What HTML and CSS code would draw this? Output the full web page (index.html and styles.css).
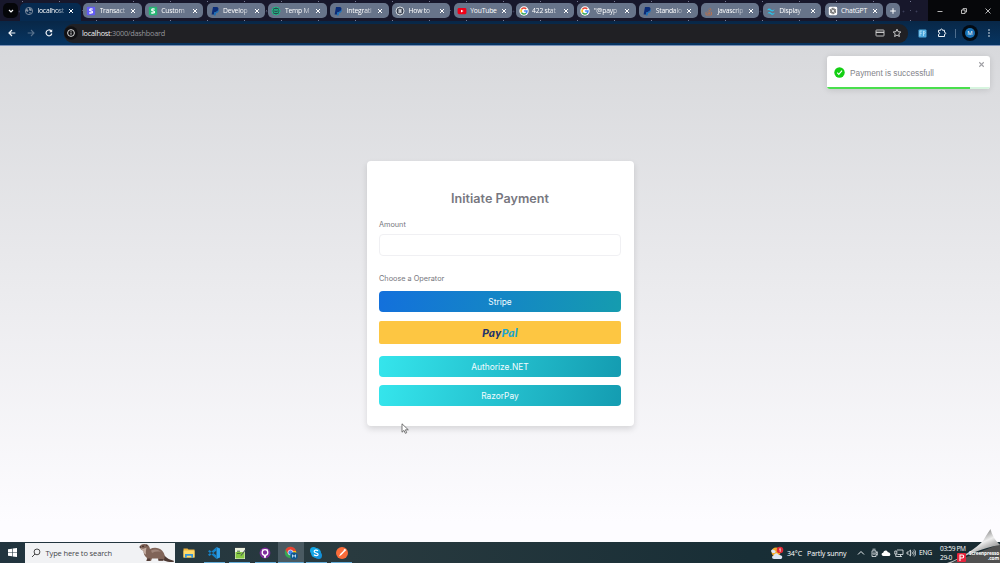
FILE: index.html
```html
<!DOCTYPE html>
<html lang="en">
<head>
    <meta charset="UTF-8">
    <meta name="viewport" content="width=device-width, initial-scale=1.0">
    <title>localhost:3000/dashboard</title>
    <link rel="stylesheet" href="styles.css">
</head>
<body>
    <svg class="defs" width="0" height="0">
        <symbol id="close" viewBox="0 0 8 8"><path d="M2 2l4 4M6 2l-4 4" stroke="currentColor" stroke-width="1" fill="none"/></symbol>
        <symbol id="stripe" viewBox="0 0 10 10"><rect x=".8" y=".8" width="8.4" height="8.4" rx="1" fill="currentColor"/><path d="M6.7 3.3C5.7 2.7 3.7 2.7 3.7 3.9s2.8.8 2.8 2-2 1.4-3.2.7" fill="none" stroke="#fff" stroke-width="1.3"/></symbol>
        <symbol id="paypal" viewBox="0 0 10 10"><path d="M3 1h3.5c2 0 2.4 1.5 1.7 3S6 6 4.5 6L4 8.5H1.6z" fill="#0a2c78"/><path d="M4.5 6.2C7 6.2 8 5 8.3 3.3c1 .8.5 3.5-2.3 3.8L5.5 9.4H3.8z" fill="#1670bd"/></symbol>
        <symbol id="google" viewBox="0 0 10 10"><circle cx="5" cy="5" r="4.7" fill="#fff"/><g fill="none" stroke-width="1.5"><path d="M7.2 3A3 3 0 0 0 2.5 3.4" stroke="#ea4335"/><path d="M2.5 3.4a3 3 0 0 0 0 3.2" stroke="#fbbc05"/><path d="M2.5 6.6A3 3 0 0 0 7 7.2" stroke="#34a853"/><path d="M7 7.2A3 3 0 0 0 8 5H5.1" stroke="#4285f4"/></g></symbol>
    </svg>

    <header class="browser">
        <div class="tab-strip">
            <div class="tab-search"><svg width="8" height="8" viewBox="0 0 8 8"><path d="M2 3l2 2 2-2" fill="none" stroke="#fff" stroke-width="1.2"/></svg></div>
            <div class="tab active">
                <svg class="fav" viewBox="0 0 10 10"><circle cx="5" cy="5" r="3.6" fill="none" stroke="#8493a5" stroke-width=".9"/><path d="M2 3l2 .5.5 1.5-1 1-1.5-1zM5 2l2 .5 1 2-2 .5L5 4zM5 6l2 .5-1 1.5z" fill="#8493a5"/></svg>
                <span>localhost</span><svg class="x"><use href="#close"/></svg>
            </div>
            <div class="tab"><svg class="fav violet"><use href="#stripe"/></svg><span>Transact</span><svg class="x"><use href="#close"/></svg></div>
            <div class="tab"><svg class="fav green"><use href="#stripe"/></svg><span>Custom</span><svg class="x"><use href="#close"/></svg></div>
            <div class="tab"><svg class="fav"><use href="#paypal"/></svg><span>Develop</span><svg class="x"><use href="#close"/></svg></div>
            <div class="tab">
                <svg class="fav" viewBox="0 0 10 10"><circle cx="5" cy="5" r="4" fill="#2b4a50" stroke="#21bd87"/><path d="M3 3.5h4v3H3zl2 1.5 2-1.5" fill="none" stroke="#21bd87" stroke-width=".8"/></svg>
                <span>Temp M</span><svg class="x"><use href="#close"/></svg>
            </div>
            <div class="tab"><svg class="fav"><use href="#paypal"/></svg><span>Integrati</span><svg class="x"><use href="#close"/></svg></div>
            <div class="tab">
                <svg class="fav" viewBox="0 0 10 10"><circle cx="5" cy="5" r="4" fill="#333b4b" stroke="#e8edf2" stroke-width=".9"/><path d="M3.2 3.2h1.6v3.6H3.2M6.8 3.2H5.6v3.6h1.2M3 5h4" fill="none" stroke="#e8edf2" stroke-width=".8"/></svg>
                <span>How to</span><svg class="x"><use href="#close"/></svg>
            </div>
            <div class="tab">
                <svg class="fav" viewBox="0 0 10 10"><rect x=".6" y="2" width="8.8" height="6.2" rx="1.4" fill="#f00018"/><path d="M4 3.7v2.8l2.5-1.4z" fill="#fff"/></svg>
                <span class="whole">YouTube</span><svg class="x"><use href="#close"/></svg>
            </div>
            <div class="tab"><svg class="fav"><use href="#google"/></svg><span>422 stat</span><svg class="x"><use href="#close"/></svg></div>
            <div class="tab"><svg class="fav"><use href="#google"/></svg><span>"@payp</span><svg class="x"><use href="#close"/></svg></div>
            <div class="tab"><svg class="fav"><use href="#paypal"/></svg><span>Standalo</span><svg class="x"><use href="#close"/></svg></div>
            <div class="tab">
                <svg class="fav" viewBox="0 0 10 10"><path d="M2 6v3h5.500V6M3.400 7.600h2.800M3.500 5.800l2.700.6M4.300 3.800l2.300 1.500M5.800 2l1.500 2.300" fill="none" stroke="#b5714f" stroke-width=".9"/></svg>
                <span>javascrip</span><svg class="x"><use href="#close"/></svg>
            </div>
            <div class="tab">
                <svg class="fav" viewBox="0 0 10 10"><path d="M1 4.500c1.500-3 3-2 4-1s2 1 3.500-.5C7.500 6 6 5.700 5 5S2.500 3.500 1 4.500zM1.500 7.500C3 5 4.500 6 5.500 7s2 .5 3.500-.5C7.500 9.500 6 9 5 8.200s-2-1.500-3.500-.7z" fill="#28c4ec"/></svg>
                <span>Display</span><svg class="x"><use href="#close"/></svg>
            </div>
            <div class="tab">
                <svg class="fav" viewBox="0 0 10 10"><rect x=".8" y=".8" width="8.400" height="8.400" rx="1.400" fill="#fff"/><path d="M5 2l2.500 1.500v3L5 8 2.500 6.500v-3zM5 3.400l1.400.8v1.600L5 6.600l-1.400-.8V4.200zM5 2L3.600 4.200M7.500 3.500L5 3.400M7.500 6.500L6.400 4.200M5 8l1.400-2.200M2.500 6.500L5 6.600M2.500 3.500l1.100 2.300" fill="none" stroke="#444" stroke-width=".55"/></svg>
                <span class="whole">ChatGPT</span><svg class="x"><use href="#close"/></svg>
            </div>
            <div class="new-tab"><svg width="8" height="8" viewBox="0 0 8 8"><path d="M4 1.200v5.600M1.200 4h5.600" stroke="#fff"/></svg></div>
            <div class="window-controls">
                <svg viewBox="0 0 8 8"><path d="M1.500 4.500h5" stroke="#ccc" stroke-width=".9"/></svg>
                <svg viewBox="0 0 8 8"><path d="M1.500 3h3.500v3.500H1.500zM3 3V1.600h3.500V5H5" fill="none" stroke="#ccc" stroke-width=".9"/></svg>
                <svg viewBox="0 0 8 8"><path d="M1.500 1.500l5 5M6.500 1.500l-5 5" stroke="#ccc" stroke-width=".9"/></svg>
            </div>
        </div>

        <div class="toolbar">
            <nav class="nav">
                <svg viewBox="0 0 10 10"><path d="M8.300 5H2M5 2L2 5l3 3" fill="none" stroke="#f2f6fa" stroke-width="1.200"/></svg>
                <svg viewBox="0 0 10 10"><path d="M1.700 5H8M5 2l3 3-3 3" fill="none" stroke="#57718c" stroke-width="1.100"/></svg>
                <svg viewBox="0 0 10 10"><path d="M7.800 5.500A2.900 2.900 0 1 1 7 2.800" fill="none" stroke="#f2f6fa" stroke-width="1.200"/><path d="M8.200 1.200v3H5.200z" fill="#f2f6fa"/></svg>
            </nav>
            <div class="address">
                <svg class="info" viewBox="0 0 14 14"><circle cx="7" cy="7" r="6.800" fill="#101013"/><circle cx="7" cy="7" r="3.400" fill="none" stroke="#eee" stroke-width=".9"/><path d="M7 6.500v2.200M7 4.900v.9" stroke="#eee" stroke-width=".9"/></svg>
                <span class="url"><b>localhost</b>:3000/dashboard</span>
                <svg class="card-icon" viewBox="0 0 10 10"><rect x="1" y="2" width="8" height="6" rx=".6" fill="none" stroke="#d0d0d0" stroke-width=".9"/><path d="M1 4.300h8" stroke="#d0d0d0" stroke-width="1.300"/></svg>
                <svg class="star" viewBox="0 0 10 10"><path d="M5 1.200l1.100 2.500 2.700.3-2 1.800.6 2.700L5 7.100 2.600 8.500l.6-2.700-2-1.800 2.700-.3z" fill="none" stroke="#ddd" stroke-width=".9"/></svg>
            </div>
            <div class="extensions">
                <svg width="9" height="9" viewBox="0 0 9 9"><rect x=".5" y=".5" width="8" height="8" rx="1" fill="#4ea9dd"/><path d="M2 7V2h2.200M2 4.300h1.800M5.500 2v5M5.500 2.300c2.200 0 2.200 2.400 0 2.400" fill="none" stroke="#b9e5fb" stroke-width=".8"/></svg>
                <svg width="10" height="10" viewBox="0 0 10 10"><path d="M1.500 2.300h2c-.3-1.700 2.300-1.700 2 0h2v2c1.700-.3 1.700 2.300 0 2v2.200h-6V6.300c1.500.3 1.500-2.300 0-2z" fill="none" stroke="#edf3f8"/></svg>
                <i class="divider"></i>
                <span class="avatar"><em>M</em></span>
                <svg class="dots" width="4" height="10" viewBox="0 0 4 10"><g fill="#edf3f8"><circle cx="2" cy="2" r=".8"/><circle cx="2" cy="5" r=".8"/><circle cx="2" cy="8" r=".8"/></g></svg>
            </div>
        </div>
    </header>

    <main class="page">
        <form class="card">
            <h1>Initiate Payment</h1>
            <label for="amount">Amount</label>
            <input id="amount" type="text">
            <label class="operator">Choose a Operator</label>
            <button type="button" class="btn stripe">Stripe</button>
            <button type="button" class="btn paypal"><span>Pay</span><span class="pal">Pal</span></button>
            <button type="button" class="btn cyan">Authorize.NET</button>
            <button type="button" class="btn cyan">RazorPay</button>
        </form>

        <div class="toast">
            <svg class="check" viewBox="0 0 11 11"><circle cx="5.500" cy="5.500" r="5.200" fill="#13cf13"/><path d="M3.200 5.700l1.600 1.700 3.200-3.700" fill="none" stroke="#fff" stroke-width="1.100"/></svg>
            <span>Payment is successfull</span>
            <svg class="dismiss"><use href="#close"/></svg>
            <div class="progress"><i></i></div>
        </div>
        <svg class="cursor" viewBox="0 0 8 11"><path d="M1 .8v8.400l2-1.800 1.300 2.900 1.400-.6-1.300-2.900h2.900z" fill="#fff" stroke="#555" stroke-width=".8"/></svg>
    </main>

    <footer class="taskbar">
        <div class="start"><svg width="9" height="9" viewBox="0 0 9 9"><path d="M0 1.300l4-.6v3.500H0zM4.600.6L9 0v4.200H4.600zM0 4.800h4v3.500l-4-.6zM4.600 4.800H9V9l-4.400-.6z" fill="#fff"/></svg></div>
        <div class="search">
            <svg class="lens" viewBox="0 0 10 10"><circle cx="6" cy="3.900" r="2.900" fill="none" stroke="#333" stroke-width=".9"/><path d="M4 6L1 9" stroke="#333" stroke-width=".9"/></svg>
            <span>Type here to search</span>
            <svg class="otter" viewBox="0 0 36 20">
                <path d="M23 11c3 1 4 5 11 6.500 2 .5 1 1.500-1 1.500-6 0-10-2-12-5z" fill="#4d3933"/>
                <path d="M1 4C1 1.500 3.500.8 6 1c3 .2 4.500 2 5 5 4-2 9-1.500 12 1.500s3.500 7 1.500 10h-5l-.5-2h-6l-1 2.500H7.500l.5-3C5 13 4.500 10 4.500 7.500 2.500 7.300 1 6 1 4z" fill="#806458"/>
                <path d="M12 7.500c4-2 8-1 10 1.500-3-.8-6-.5-9 1z" fill="#a0867b"/>
                <path d="M1.500 5c2 1 4 .8 6-.5-.3 2-1 4-.5 7C5 11 4.500 9 4.500 7.500 3 7.300 2 6.500 1.500 5z" fill="#c4ada1"/>
                <path d="M7.500 18l1-2.500h3l-.8 2.500zM19.500 17.700V16h5l-.5 1.700z" fill="#503c36"/>
                <circle cx="4" cy="3.300" r=".7" fill="#211"/><circle cx="1.200" cy="4" r=".8" fill="#322"/><circle cx="7.700" cy="2.300" r=".9" fill="#5a443c"/>
            </svg>
        </div>
        <div class="apps">
            <div class="app no-line"><svg viewBox="0 0 14 14"><path d="M1.500 2.500h4l1 1h6v8h-11z" fill="#eeb43e"/><path d="M1.500 4.500h11v7h-11z" fill="#ffda6b"/><path d="M3 11.800V8h8v3.800H9.300V9.700H4.700v2.100z" fill="#3595dc"/></svg></div>
            <div class="app"><svg viewBox="0 0 14 14"><path d="M9.500 1l3.500 1.500v9L9.500 13z" fill="#2a9ee8"/><path d="M9.500 1v3.500L2.500 10 1 8.800zM9.500 13V9.500L2.500 4 1 5.200z" fill="#1683c8"/></svg></div>
            <div class="app"><svg viewBox="0 0 14 14"><path d="M2 2h10v11H2z" fill="#eaf0dd"/><path d="M3 2V1M5 2V1M7 2V1M9 2V1M11 2V1" stroke="#555"/><path d="M2.500 6h9v6.500h-9z" fill="#85c842"/><path d="M4 5.200h3M4 7.500h3.500" stroke="#456c38"/><path d="M7.500 9.500l4.500-6 .8.700-4.500 5.500z" fill="#49545b"/></svg></div>
            <div class="app"><svg viewBox="0 0 14 14"><circle cx="7" cy="7" r="5.400" fill="#802b9d"/><circle cx="7" cy="6.500" r="2.800" fill="none" stroke="#fff" stroke-width="1.300"/><path d="M4.300 5V3.200l1.700.7M9.700 5V3.200L8 3.900" fill="#fff"/><path d="M6 9.200v2.500h2V9.200z" fill="#fff"/></svg></div>
            <div class="app current"><svg viewBox="0 0 14 14"><circle cx="6.500" cy="6.500" r="5.700" fill="#35a853"/><path d="M1.500 3.800A5.700 5.700 0 0 1 12 5H6.500l-2.700 3z" fill="#e94335"/><path d="M12 5c.8 3-1 6.500-4.500 7.200L9 5z" fill="#fbbf12"/><circle cx="6.500" cy="6.500" r="2.500" fill="#3e82ec" stroke="#fff" stroke-width=".7"/><circle cx="10" cy="10" r="3.700" fill="#0e578f"/><path d="M8.500 11.500V8.700L10 10.500l1.500-1.800v2.800" fill="none" stroke="#d9efff" stroke-width=".8"/></svg></div>
            <div class="app"><svg viewBox="0 0 14 14"><circle cx="7" cy="7" r="5" fill="#12a5e4"/><circle cx="4.500" cy="4.500" r="3.500" fill="#12a5e4"/><circle cx="9.500" cy="9.500" r="3.500" fill="#1390d9"/><path d="M9 4.900C7.800 3.700 5 4 5.200 5.700c.2 1.500 3.900 1.100 3.900 2.700 0 1.500-3 1.600-4.200.2" fill="none" stroke="#fff" stroke-width="1.200"/></svg></div>
            <div class="app"><svg viewBox="0 0 14 14"><circle cx="7" cy="7" r="6" fill="#fa6c3a"/><path d="M4 10.500L5.200 8 9 4.200l1 1L6.300 9z" fill="#fff"/><circle cx="9.800" cy="4.200" r="1.100" fill="#fff"/></svg></div>
        </div>
        <div class="weather">
            <svg viewBox="0 0 14 14"><circle cx="6" cy="6" r="4.500" fill="#f3a92b"/><path d="M4 13c-2.500 0-2.500-3.500 0-3.500 0-3 4-3 4.700-.5 2-.3 4 1 3.500 2.500-.3 1-1 1.500-2 1.500z" fill="#dbe6f5"/><path d="M1.500 6c-1.500-2 1.500-3.700 2.500-1.700 2 0 2 2.700.5 2.700H2.500z" fill="#dbe6f5"/><circle cx="10" cy="4" r="3.300" fill="#dc2834"/><path d="M9.300 3.300l.9-.8v3.300" stroke="#fff" stroke-width=".8" fill="none"/></svg>
            <span>34°C</span><span>Partly sunny</span>
        </div>
        <div class="tray">
            <svg viewBox="0 0 10 10"><path d="M2 6.500l3-3 3 3" fill="none" stroke="#e8edf0"/></svg>
            <svg viewBox="0 0 10 10"><path d="M3 2.800h4v5.700H3zM3.500 1.200h3M7 4.500l1.300-.7v3.400L7 6.500" fill="none" stroke="#e8edf0" stroke-width=".8"/><circle cx="5" cy="5.600" r=".9" fill="none" stroke="#e8edf0" stroke-width=".7"/></svg>
            <svg viewBox="0 0 10 10"><path d="M2.500 8C.2 8-.1 5 2.200 4.700 3 2 6 2 6.900 4.200 9.700 4 10.300 8 7.700 8z" fill="#fff"/></svg>
            <svg viewBox="0 0 10 10"><path d="M3 2h6v4.500H3.500M5 8.500h3M6.500 6.500v2M.8 3h2v3h-2zM1.800 6v2.500H5" fill="none" stroke="#e8edf0" stroke-width=".8"/></svg>
            <svg viewBox="0 0 10 10"><path d="M1 4h1.300L4.500 2v6L2.300 6H1zM5.800 3.700c.8.800.8 1.800 0 2.600M7 2.500c1.500 1.500 1.500 3.500 0 5M8.200 1.500c2 2 2 5 0 7" fill="none" stroke="#e8edf0" stroke-width=".8"/></svg>
            <span>ENG</span>
        </div>
        <div class="clock"><span>03:59 PM</span><span>29-0</span></div>
    </footer>

    <div class="page-curl">
        <svg viewBox="0 0 54 36">
            <defs><linearGradient id="fold" x1=".38" y1=".38" x2=".68" y2=".8"><stop offset="0" stop-color="#a5a5a5"/><stop offset=".35" stop-color="#eee"/><stop offset=".6" stop-color="#c0c0c0"/><stop offset="1" stop-color="#888"/></linearGradient></defs>
            <path d="M54 17L5 36h49z" fill="#505050"/>
            <path d="M1 36C16 31 30 21 37 14q4-7 7.500-12 2 9 9.500 16C36 21 20 28 5 36z" fill="url(#fold)"/>
            <rect x="11" y="26" width="9" height="9" rx="1" fill="#e5243c"/><path d="M14 34v-6h2.200c2 0 2 3 0 3H14" fill="none" stroke="#fff" stroke-width="1.100"/>
        </svg>
        <span>Screenpresso<br>.com</span>
    </div>
</body>
</html>
```
FILE: styles.css
```css
* {
    box-sizing: border-box;
}
body {
    margin: 0;
    width: 1000px;
    height: 563px;
    display: flex;
    flex-direction: column;
    overflow: hidden;
    font-family: "Open Sans", "Noto Sans", sans-serif;
}
svg {
    display: block;
    flex: none;
}
.defs {
    position: absolute;
}

/* browser */
.browser {
    height: 46px;
    flex: none;
    background: #07305a;
    border-bottom: 1px solid #7990b5;
}
.tab-strip {
    height: 21px;
    display: flex;
    align-items: center;
    padding-left: 3px;
    background-color: #17172b;
    background-image:
        radial-gradient(circle, #777b96 0.5px, transparent 1px),
        radial-gradient(circle, #53566f 0.5px, transparent 1px),
        radial-gradient(circle, #3c3e58 0.6px, transparent 1.2px);
    background-size: 37px 19px, 23px 11px, 13px 17px;
    background-position: 4px -8px, 2px 5px, 0 3px;
}
.tab-search {
    width: 15px;
    height: 15px;
    border-radius: 5px;
    background: #050609;
    display: grid;
    place-items: center;
}
.tab {
    width: 58.5px;
    height: 15px;
    margin-right: 3.3px;
    padding: 0 4.5px 0 3px;
    border-radius: 5px;
    background: #67748a;
    display: flex;
    align-items: center;
    color: #fff;
    font-size: 6.8px;
    letter-spacing: -0.22px;
    flex: none;
}
.tab.active {
    width: 61px;
    height: 18px;
    align-self: flex-end;
    margin: 0 2px 0 2px;
    padding: 0 6px 3px 4px;
    background: #062a50;
    border-radius: 5px 5px 0 0;
}
.tab span {
    width: 29px;
    margin-left: 3.5px;
    white-space: nowrap;
    -webkit-mask-image: linear-gradient(90deg, #000 60%, transparent 105%);
    mask-image: linear-gradient(90deg, #000 60%, transparent 105%);
}
.tab .whole {
    -webkit-mask-image: none;
    mask-image: none;
}
.fav {
    width: 10px;
    height: 10px;
}
.violet {
    color: #625bf5;
}
.green {
    color: #25b573;
}
.x {
    width: 8px;
    height: 8px;
    margin-left: auto;
}
.new-tab {
    width: 14px;
    height: 15px;
    border-radius: 5px;
    background: #67748a;
    display: grid;
    place-items: center;
}
.window-controls {
    margin-left: auto;
    width: 72px;
    height: 21px;
    padding: 0 8px;
    display: flex;
    justify-content: space-between;
    align-items: center;
    background: #06070a;
}
.window-controls svg {
    width: 8px;
    height: 8px;
}
.toolbar {
    height: 24px;
    display: flex;
    align-items: center;
    background: linear-gradient(#082747, #073562);
}
.nav {
    width: 64px;
    padding-left: 7px;
    display: flex;
    gap: 8.5px;
}
.nav svg {
    width: 10px;
    height: 10px;
}
.address {
    width: 844px;
    height: 19px;
    padding: 0 6px 0 0;
    border-radius: 9px;
    background: #202024;
    display: flex;
    align-items: center;
}
.info {
    width: 14px;
    height: 14px;
}
.url {
    margin-left: 4px;
    margin-right: auto;
    color: #94959a;
    font-size: 7.3px;
    letter-spacing: -0.24px;
}
.url b {
    font-weight: 400;
    color: #f3f3f3;
}
.card-icon,
.star {
    width: 10px;
    height: 10px;
}
.star {
    margin-left: 7px;
}
.extensions {
    flex: 1;
    padding-left: 10px;
    display: flex;
    align-items: center;
}
.extensions svg + svg {
    margin-left: 10px;
}
.divider {
    width: 1px;
    height: 9px;
    margin: 0 6px 0 8px;
    background: #4e6d8d;
}
.avatar {
    width: 16px;
    height: 16px;
    margin-right: 9px;
    border-radius: 50%;
    background: #030b14;
    display: grid;
    place-items: center;
}
.avatar em {
    width: 10px;
    height: 10px;
    border-radius: 50%;
    background: #1870b4;
    color: #fff;
    font: 6px/10px "Open Sans", sans-serif;
    text-align: center;
}

/* payment page */
.page {
    position: relative;
    flex: 1;
    padding-top: 115px;
    background: linear-gradient(#d8d9dc, #fdfcff 96%);
    font-family: Inter, sans-serif;
}
.card {
    width: 267px;
    height: 265px;
    margin: 0 auto;
    padding: 29px 12.5px 0;
    border-radius: 4px;
    background: #fff;
    box-shadow: 0 3px 6px rgba(0, 0, 0, 0.13);
    display: flex;
    flex-direction: column;
}
h1 {
    margin: 0 0 11px;
    font-size: 12.6px;
    line-height: 18px;
    font-weight: 600;
    text-align: center;
    color: #77777f;
}
label {
    margin-bottom: 4px;
    font-size: 7.3px;
    line-height: 11px;
    color: #77777e;
}
input {
    height: 22px;
    margin: 0 0 17px;
    border: 1px solid #f0f0f3;
    border-radius: 4px;
    background: #fff;
}
.operator {
    margin-bottom: 7px;
}
.btn {
    height: 21px;
    flex: none;
    padding: 1px 0 0;
    margin-bottom: 8.5px;
    border: 0;
    border-radius: 4px;
    color: #f2fcff;
    font: 8.4px/20px Inter, sans-serif;
}
.stripe {
    background: linear-gradient(100deg, #1370dc, #159caf);
}
.cyan {
    background: linear-gradient(100deg, #35e5ec, #149cb1);
}
.paypal {
    height: 23.5px;
    padding: 0;
    margin-bottom: 11.5px;
    border-radius: 2px;
    background: #fdc642;
    color: #23346b;
    font: italic 900 11.8px/23px Lato, sans-serif;
    letter-spacing: 0.3px;
}
.pal {
    color: #20a5cd;
}
.toast {
    position: absolute;
    top: 10px;
    right: 10.5px;
    width: 162.5px;
    height: 33px;
    padding-left: 7px;
    border-radius: 3px;
    background: #fff;
    box-shadow: 0 1px 6px rgba(0, 0, 0, 0.12);
    display: flex;
    align-items: center;
    gap: 5px;
    overflow: hidden;
    font: 8.3px "Liberation Sans", sans-serif;
    color: #84848a;
}
.check {
    width: 11px;
    height: 11px;
}
.dismiss {
    position: absolute;
    top: 4px;
    right: 4px;
    width: 9px;
    height: 9px;
    color: #a0a0a5;
}
.progress {
    position: absolute;
    left: 0;
    right: 0;
    bottom: 0;
    height: 2.5px;
    background: #d7f5df;
}
.progress i {
    display: block;
    width: 88%;
    height: 100%;
    background: #49df4d;
}
.cursor {
    position: absolute;
    left: 401px;
    top: 377px;
    width: 8px;
    height: 11px;
}

/* taskbar */
.taskbar {
    height: 21px;
    flex: none;
    display: flex;
    align-items: center;
    background: linear-gradient(90deg, #21343e, #293a3f 35%, #182e36 75%, #192b32);
    color: #fff;
    font-size: 7.1px;
}
.start {
    width: 25px;
    display: grid;
    place-items: center;
}
.search {
    width: 150px;
    height: 20px;
    padding-left: 6px;
    background: #f1f2f4;
    color: #44464a;
    display: flex;
    align-items: center;
    font-size: 7.5px;
    letter-spacing: -0.13px;
}
.lens {
    width: 10px;
    height: 10px;
    margin-right: 4.5px;
}
.otter {
    width: 36px;
    height: 20px;
    margin-left: auto;
}
.apps {
    display: flex;
    margin-left: 1px;
}
.app {
    width: 25.5px;
    height: 21px;
    display: grid;
    place-items: center;
    background: linear-gradient(#66aeda, #66aeda) center bottom / 21px 1.5px no-repeat;
}
.app.no-line {
    background: none;
}
.app.current {
    background-color: #4a5a62;
    background-size: 100% 1.5px;
}
.app svg {
    width: 14px;
    height: 14px;
}
.weather {
    display: flex;
    align-items: center;
    margin-left: auto;
    white-space: nowrap;
    letter-spacing: -0.12px;
}
.weather svg {
    width: 14px;
    height: 14px;
    margin-right: 3px;
}
.weather span + span {
    margin-left: 5px;
}
.tray {
    display: flex;
    align-items: center;
    gap: 2.5px;
    margin-left: 10px;
    font-size: 6.8px;
    letter-spacing: -0.25px;
}
.tray svg {
    width: 10px;
    height: 10px;
}
.clock {
    width: 60px;
    margin-left: 8px;
    display: flex;
    flex-direction: column;
    font-size: 6.6px;
    line-height: 9px;
    letter-spacing: -0.35px;
    white-space: nowrap;
}
.page-curl {
    position: absolute;
    right: 0;
    bottom: 0;
    width: 54px;
    height: 36px;
}
.page-curl span {
    position: absolute;
    right: 1px;
    bottom: 2px;
    color: #fff;
    font: 700 4.8px/5px "Open Sans", sans-serif;
    letter-spacing: -0.15px;
    text-align: right;
}
```
